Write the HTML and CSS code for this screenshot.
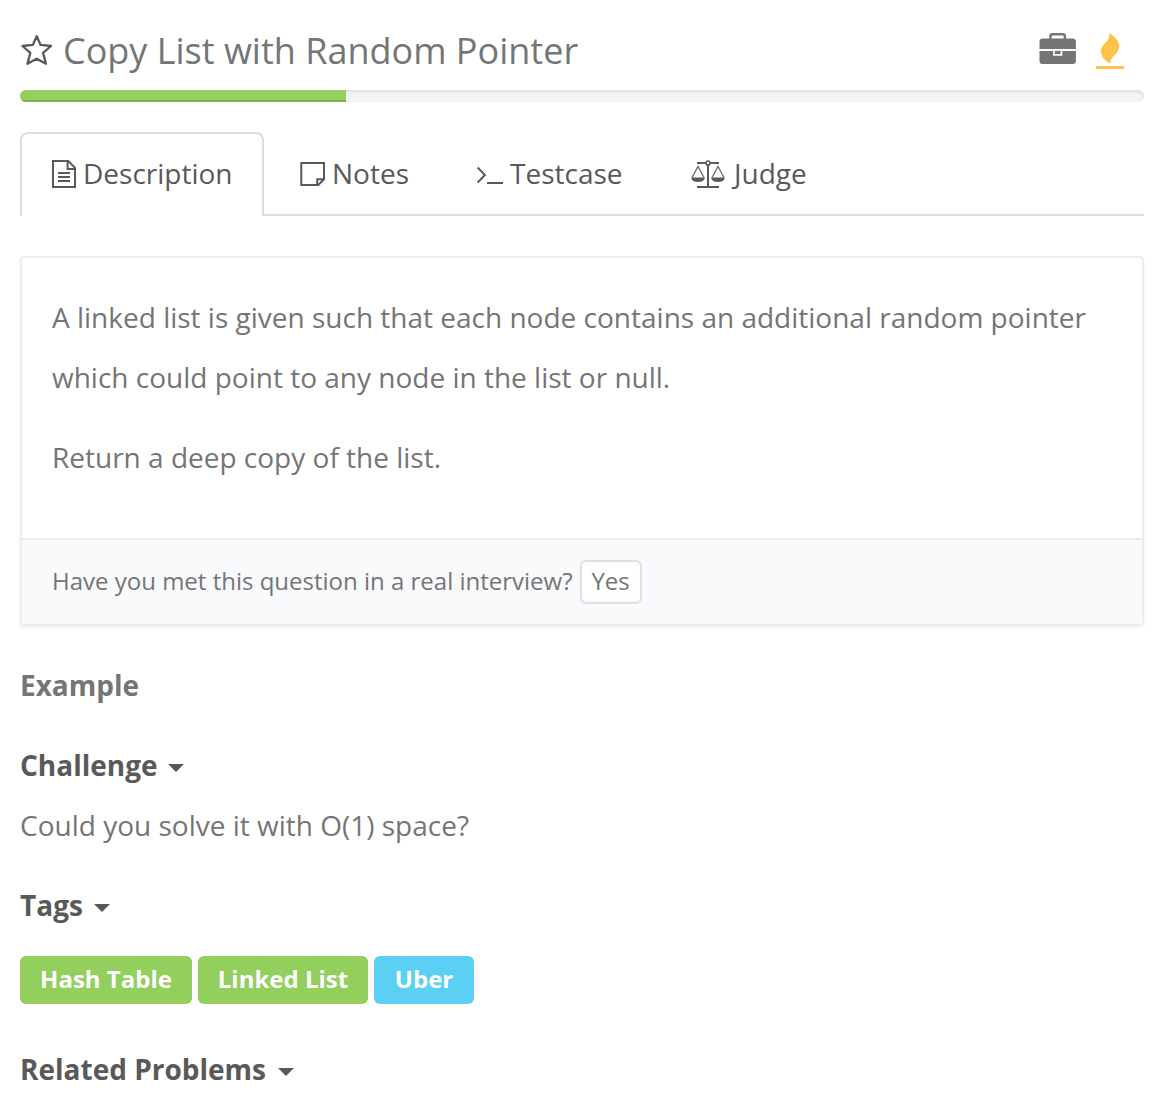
FILE: index.html
```html
<!DOCTYPE html>
<html lang="en">
<head>
<meta charset="utf-8">
<title>Copy List with Random Pointer</title>
<link rel="stylesheet" href="styles.css">
</head>
<body>
<main class="problem">
  <header class="title-bar">
    <svg class="star" width="34" height="34" viewBox="0 0 34 34"><path d="M16.7 3.2 20.5 11.9 31 13 23.1 19.9 25.9 30.7 16.7 25.7 7.5 30.7 10.3 19.9 2.4 13 12.9 11.9Z"/></svg>
    <h1 class="title">Copy List with Random Pointer</h1>
    <div class="title-icons">
      <svg class="briefcase" width="37" height="32" viewBox="-0.5 0.5 37 32">
        <path d="M11 7V3.4Q11 1.7 13.1 1.7H23.3Q25.4 1.7 25.4 3.4V7" fill="none" stroke="#757575" stroke-width="2.4"/>
        <path d="M3.3 6H33.1Q36.4 6 36.4 9.3V16.5H0V9.3Q0 6 3.3 6ZM0 18.4H13.6V23.3H22.8V18.4H36.4V28.6Q36.4 31.6 33.4 31.6H3Q0 31.6 0 28.6Z" fill="#757575"/>
        <path d="M15.3 18.4H21.1V21.6H15.3Z" fill="#757575"/>
      </svg>
      <svg class="flame" width="28" height="37" viewBox="0 0 28 37">
        <path d="M12.8 0C17.5 2.3 23.2 7 23.2 13.2C23.2 21.5 14.3 22.2 14.7 30.6C9.3 28 5 24 5 18.5C5 9.5 15.4 8.7 12.8 0Z"/>
        <path d="M0 33H28V36H0Z"/>
      </svg>
    </div>
  </header>
  <div class="progress"><div class="progress-fill"></div></div>

  <nav class="tabs">
    <a class="tab tab-active">
      <svg class="icon-doc" width="24" height="28" viewBox="0 0 24 28"><path d="M1 1H16.3L23 7.8V27H1ZM15.6 1V9H23M6 13H18M6 17H18M6 21H18"/></svg>
      <span>Description</span>
    </a>
    <a class="tab tab-notes">
      <svg class="icon-note" width="25" height="24" viewBox="0 0 25 24"><path d="M1.3 1H24V17.3L18.3 23H1.3ZM17.2 23V17.2H24"/></svg>
      <span>Notes</span>
    </a>
    <a class="tab tab-test">
      <svg class="icon-term" width="27" height="19" viewBox="0 0 27 19"><path d="M1.7 1.5 8.9 9 1.7 16.5M11 17H27"/></svg>
      <span>Testcase</span>
    </a>
    <a class="tab tab-judge">
      <svg class="icon-scale" width="34" height="28" viewBox="0 0 34 28">
        <path d="M6 3H14.5M19.5 3H28M17 5V26M6 27H28" stroke-width="2"/>
        <circle cx="17" cy="3" r="2" stroke-width="1.7"/>
        <path d="M1 17.5 7 6.5 13 17.5M21 17.5 27 6.5 33 17.5" stroke-width="1.1"/>
        <path class="pan" d="M0 17.5H14Q13 22 7 22T0 17.5ZM20 17.5H34Q33 22 27 22T20 17.5Z"/>
      </svg>
      <span>Judge</span>
    </a>
  </nav>

  <section class="panel">
    <div class="panel-body">
      <p>A linked list is given such that each node contains an additional random pointer which could point to any node in the list or null.</p>
      <p>Return a deep copy of the list.</p>
    </div>
    <footer class="panel-footer">
      <span class="question">Have you met this question in a real interview?</span>
      <button class="yes">Yes</button>
    </footer>
  </section>

  <h2 class="heading heading-light">Example</h2>
  <h2 class="heading">Challenge <i class="caret"></i></h2>
  <p class="challenge">Could you solve it with O(1) space?</p>
  <h2 class="heading">Tags <i class="caret caret-tags"></i></h2>
  <div class="tags">
    <span class="tag tag-hash">Hash Table</span>
    <span class="tag tag-list">Linked List</span>
    <span class="tag tag-company">Uber</span>
  </div>
  <h2 class="heading">Related Problems <i class="caret caret-related"></i></h2>
</main>
</body>
</html>
```
FILE: styles.css
```css
* { box-sizing: border-box; }
body {
  margin: 0;
  background: #fff;
  color: #757575;
  font: 28px/60px "Open Sans", "Noto Sans", sans-serif;
}
p, h1, h2 { margin: 0; }
svg { display: block; flex: none; }
.problem { width: 1144px; padding: 20px 0 0 20px; }

.title-bar { display: flex; height: 70px; }
.star { margin: 13px 9px 0 0; fill: none; stroke: #595959; stroke-width: 2.3; stroke-linejoin: round; }
.title { font-size: 36px; font-weight: 400; line-height: 62px; white-space: nowrap; }
.title-icons { display: flex; gap: 20px; margin: 13px 20px 0 auto; }
.flame { fill: #ffc34a; }

.progress {
  height: 12px;
  border-radius: 6px;
  overflow: hidden;
  background: #f5f5f5;
  box-shadow: inset 0 2px 4px rgba(0, 0, 0, .1);
}
.progress-fill { width: 29%; height: 100%; background: #92cf5c; box-shadow: inset 0 -2px 0 #7bb04f; }

.tabs {
  display: flex;
  height: 84px;
  margin-top: 30px;
  color: #595959;
  box-shadow: inset 0 -2px 0 #ddd;
}
.tab { display: flex; align-items: flex-start; height: 84px; line-height: 82px; white-space: nowrap; }
.tab-active { width: 244px; padding-left: 30px; background: #fff; border: 2px solid #ddd; border-bottom: 0; border-radius: 8px 8px 0 0; line-height: 78px; }
.tab svg { fill: none; stroke: #595959; stroke-width: 2; }
.icon-doc { margin: 26px 7px 0 0; }
.tab-notes { width: 176px; padding-left: 36px; }
.icon-note { margin: 30px 7px 0 0; }
.tab-test { width: 214px; padding-left: 36px; }
.icon-term { margin: 34px 7px 0 0; }
.tab-judge { padding-left: 37px; }
.icon-scale { margin: 28px 9px 0 0; }
.tab .pan { fill: #595959; stroke: none; }

.panel {
  margin-top: 40px;
  border: 2px solid #e9eef5;
  border-radius: 4px;
  box-shadow: 0 2px 4px rgba(0, 0, 0, .05);
}
.panel-body { height: 280px; padding: 29px 30px 31px; }
.panel-body p + p { margin-top: 20px; }
.panel-footer {
  display: flex;
  align-items: center;
  gap: 7px;
  height: 86px;
  padding-left: 30px;
  border-top: 2px solid #e9eef5;
  background: #f9fafc;
  font-size: 24px;
}
.question { padding-bottom: 2px; }
.yes {
  width: 62px;
  height: 44px;
  padding: 0 0 2px;
  border: 2px solid #dfdfeb;
  border-radius: 6px;
  background: #fff;
  box-shadow: inset 0 -2px 2px rgba(0, 0, 0, .03);
  color: inherit;
  font: 24px/38px "Open Sans", "Noto Sans", sans-serif;
}

.heading { margin-top: 20px; color: #595959; font-size: 28px; font-weight: 700; line-height: 60px; }
.heading-light { margin-top: 29px; color: #757575; }
.caret {
  display: inline-block;
  margin-left: 3px;
  border: 8px solid transparent;
  border-top-color: #595959;
  border-bottom: 0;
  vertical-align: 4px;
}
.caret-tags { margin-left: 4px; }
.caret-related { margin-left: 5px; }
.tags { display: flex; gap: 6px; height: 65px; padding-top: 21px; }
.tag { height: 48px; border-radius: 6px; background: #92cf5c; color: #fff; font-size: 24px; font-weight: 700; line-height: 46px; text-align: center; }
.tag-hash { width: 172px; }
.tag-list { width: 170px; }
.tag-company { width: 100px; background: #5bcff4; }
.tags + .heading { margin-top: 39px; }
```
